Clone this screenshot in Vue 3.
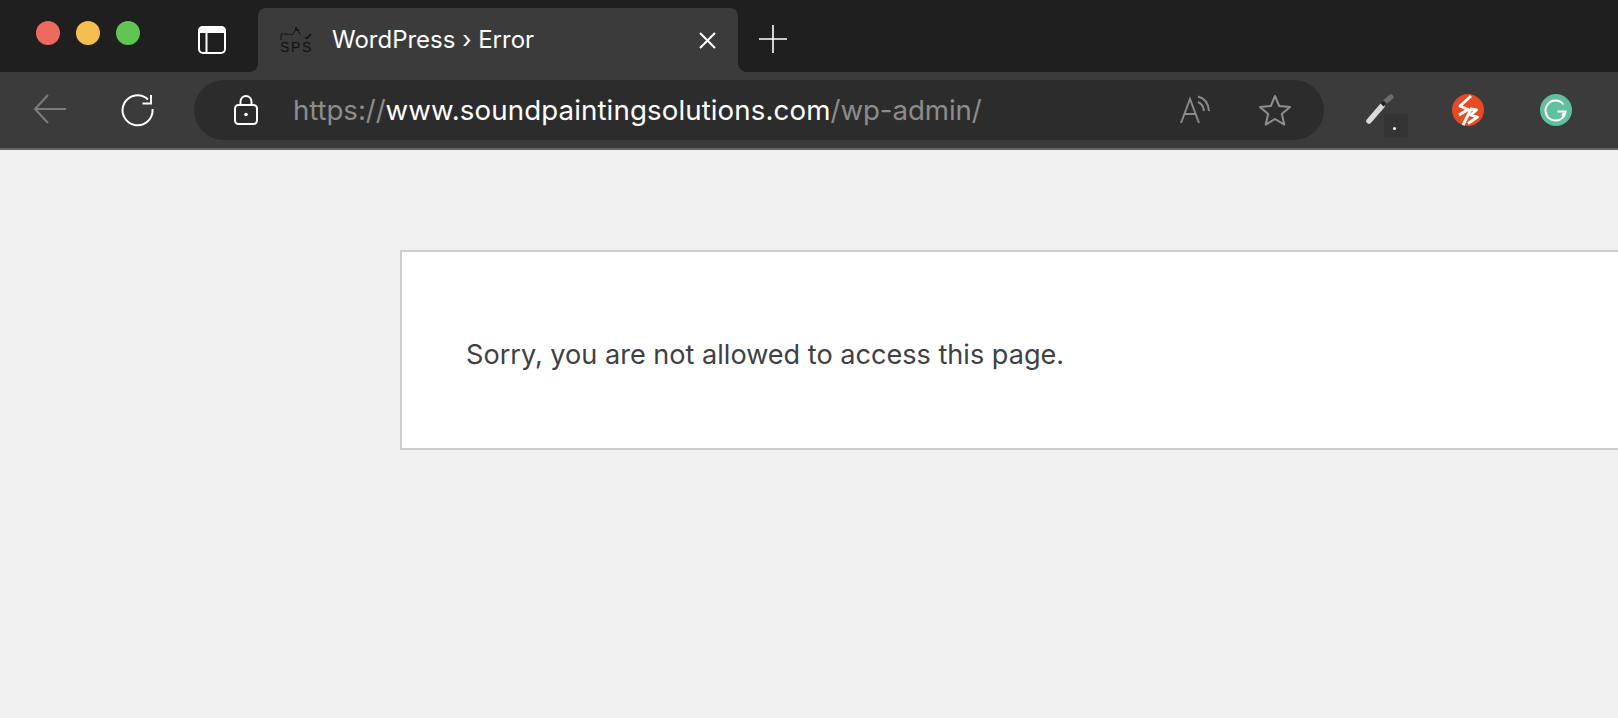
<template>
  <div class="window">
    <!-- Tab strip -->
    <div class="titlebar">
      <div class="lights">
        <span class="light red"></span>
        <span class="light yellow"></span>
        <span class="light green"></span>
      </div>
      <svg class="sidebar-icon" width="28" height="28" viewBox="0 0 28 28" fill="none" stroke="#fff" stroke-width="2">
        <rect x="1" y="1" width="26" height="26" rx="4" />
        <path d="M8.5 6V27" />
        <path d="M5 0H23a5 5 0 0 1 5 5V7H0V5a5 5 0 0 1 5-5Z" fill="#fff" stroke="none" />
      </svg>
      <div class="tab">
        <svg class="favicon" width="32" height="28" viewBox="0 0 32 28" fill="none">
          <path d="M1 14V8c2-1 3 0 4 1l1-2 2 2 2-1 2 1 1-1 2-3 1-4 1 4 1-2 1 4 2 2" stroke="#111" stroke-width="0.9" />
          <path d="M25 11l2 1.5 4-4.5" stroke="#111" stroke-width="1.4" />
          <text x="0" y="26" class="favicon-text">SPS</text>
        </svg>
        <span class="tab-title">WordPress › Error</span>
        <svg class="tab-close" width="17" height="17" viewBox="0 0 17 17" stroke="#fff" stroke-width="2">
          <path d="M1 1L16 16M16 1L1 16" />
        </svg>
      </div>
      <svg class="plus" width="28" height="28" viewBox="0 0 28 28" stroke="#fff" stroke-width="1.6">
        <path d="M0 14H28M14 0V28" />
      </svg>
    </div>

    <!-- Address bar row -->
    <div class="toolbar">
      <svg class="back" width="34" height="30" viewBox="0 0 34 30" fill="none" stroke="#7c7c7c" stroke-width="2">
        <path d="M33 15H2M15 1L2 15L15 29" />
      </svg>
      <svg class="reload" width="34" height="34" viewBox="0 0 34 34" fill="none" stroke="#fff" stroke-width="2">
        <path d="M31.5 15A15 15 0 1 1 27 5.5" />
        <path d="M30 1V9.5H21.5" />
      </svg>
      <div class="urlbar">
        <svg class="lock" width="24" height="30" viewBox="0 0 24 30" fill="none" stroke="#fff" stroke-width="2">
          <rect x="1" y="10" width="22" height="19" rx="3.5" />
          <path d="M6.5 10V6.5a5.5 5.5 0 0 1 11 0V10" />
          <circle cx="12" cy="19.5" r="1.8" fill="#fff" stroke="none" />
        </svg>
        <div class="url"><span class="dim">https://</span><span class="host">www.soundpaintingsolutions.com</span><span class="dim">/wp-admin/</span></div>
        <svg class="read" width="32" height="30" viewBox="0 0 32 30" fill="none" stroke="#8a8a8a" stroke-width="2">
          <path d="M1 28L10 4L19 28M4 19H16" />
          <path d="M18 7Q23 9 24 16M18 1.5Q28 4 29 16" />
        </svg>
        <svg class="star" width="34" height="32" viewBox="0 0 34 32" fill="none" stroke="#8f8f8f" stroke-width="2" stroke-linejoin="round">
          <path d="M17 2L21.2 12 32 12.9 23.8 20 26.3 30.6 17 25 7.7 30.6 10.2 20 2 12.9 12.8 12Z" />
        </svg>
      </div>
      <div class="extensions">
        <div class="dropper">
          <svg width="32" height="32" viewBox="0 0 32 32" fill="none">
            <path d="M21 8L27 3" stroke="#6c6c6c" stroke-width="5" stroke-linecap="round" />
            <path d="M5 27L18 12" stroke="#d9d9d9" stroke-width="5.5" stroke-linecap="round" />
            <path d="M18 11L21 8" stroke="#222" stroke-width="4" />
          </svg>
          <span class="dropper-tip"><i></i></span>
        </div>
        <svg width="32" height="32" viewBox="0 0 32 32" fill="none">
          <circle cx="16" cy="16" r="16" fill="#e54b25" />
          <path d="M19 2L8 12L16 15.5L7 21" stroke="#fff" stroke-width="2.8" stroke-linejoin="round" />
          <path d="M11 31L19 15L24.5 16L18.5 21L25.5 23L16 29.5" stroke="#fff" stroke-width="2.8" stroke-linejoin="round" />
        </svg>
        <svg width="32" height="32" viewBox="0 0 32 32" fill="none">
          <circle cx="16" cy="16" r="16" fill="#5fbf9f" />
          <path d="M23.5 10.5A10 10 0 1 0 25.5 17.5H17.5" stroke="#fff" stroke-width="2" />
          <path d="M22 21.5L26 17.5" stroke="#fff" stroke-width="2" />
        </svg>
      </div>
    </div>

    <!-- Page -->
    <main class="page">
      <div class="die-message">
        <p>Sorry, you are not allowed to access this page.</p>
      </div>
    </main>
  </div>
</template>

<script setup>
</script>

<style>
html, body {
  margin: 0;
  background: #f0f0f1;
  overflow: hidden;
}
</style>

<style scoped>
.window {
  width: 1618px;
  height: 718px;
  overflow: hidden;
  font-family: Inter, "Noto Sans", sans-serif;
  display: flex;
  flex-direction: column;
}

/* tab strip */
.titlebar {
  height: 72px;
  background: #1f1f1f;
  display: flex;
  align-items: flex-end;
  box-sizing: border-box;
  padding-left: 36px;
  flex-shrink: 0;
}
.lights {
  display: flex;
  gap: 16px;
  align-self: flex-start;
  margin-top: 21px;
}
.light {
  width: 24px;
  height: 24px;
  border-radius: 50%;
}
.red { background: #ec6a5e; }
.yellow { background: #f4bf4f; }
.green { background: #61c554; }

.sidebar-icon {
  align-self: flex-start;
  margin: 26px 32px 0 58px;
}
.tab {
  position: relative;
  width: 480px;
  height: 64px;
  background: #3b3b3b;
  border-radius: 8px 8px 0 0;
  display: flex;
  align-items: center;
  box-sizing: border-box;
  padding: 0 22px 0 22px;
  color: #fff;
}
/* the dark strip curves into the tab at its foot */
.tab::before,
.tab::after {
  content: "";
  position: absolute;
  bottom: 0;
  width: 8px;
  height: 8px;
}
.tab::before {
  left: -8px;
  background: radial-gradient(circle at 0 0, transparent 7.5px, #3b3b3b 8px);
}
.tab::after {
  right: -8px;
  background: radial-gradient(circle at 100% 0, transparent 7.5px, #3b3b3b 8px);
}
.favicon {
  flex-shrink: 0;
}
.favicon-text {
  font-family: "Liberation Sans", sans-serif;
  font-size: 14px;
  letter-spacing: 1.6px;
  fill: #111;
}
.tab-title {
  margin: 0 0 2px 20px;
  font-size: 24px;
  flex: 1;
  white-space: nowrap;
}
.plus {
  align-self: flex-start;
  margin: 25px 0 0 21px;
}

/* toolbar */
.toolbar {
  height: 76px;
  background: #3b3b3b;
  border-bottom: 2px solid #666;
  display: flex;
  align-items: flex-start;
  flex-shrink: 0;
}
.back {
  margin: 22px 0 0 33px;
}
.reload {
  margin: 22px 0 0 54px;
}
.urlbar {
  width: 1130px;
  height: 60px;
  margin: 8px 0 0 39px;
  background: #2c2c2c;
  border-radius: 30px;
  display: flex;
  align-items: center;
  box-sizing: border-box;
  padding-left: 40px;
}
.lock {
  flex-shrink: 0;
}
.url {
  margin-left: 35px;
  width: 887px;
  font-size: 27.7px;
  white-space: nowrap;
}
.dim {
  color: #8c8c8c;
  letter-spacing: -0.1px;
}
.host {
  color: #fff;
  letter-spacing: 0.1px;
}
.read {
  flex-shrink: 0;
}
.star {
  flex-shrink: 0;
  margin-left: 46px;
}
.extensions {
  display: flex;
  gap: 56px;
  margin: 22px 0 0 40px;
}
.dropper {
  position: relative;
  width: 32px;
  height: 32px;
}
.dropper-tip {
  position: absolute;
  left: 20px;
  top: 20px;
  width: 24px;
  height: 24px;
  border-radius: 3px;
  background: #333;
}
.dropper-tip i {
  position: absolute;
  left: 9px;
  top: 13px;
  width: 3px;
  height: 3px;
  border-radius: 50%;
  background: #fff;
}

/* page */
.page {
  flex: 1;
  background: #f0f0f1;
  padding: 100px 0 0 400px;
}
.die-message {
  width: 1400px;
  height: 200px;
  box-sizing: border-box;
  background: #fff;
  border: 2px solid #cbccd0;
  display: flex;
  align-items: center;
  padding: 8px 0 0 64px;
}
.die-message p {
  margin: 0;
  font-size: 27.1px;
  color: #3e4144;
  white-space: nowrap;
}
</style>
